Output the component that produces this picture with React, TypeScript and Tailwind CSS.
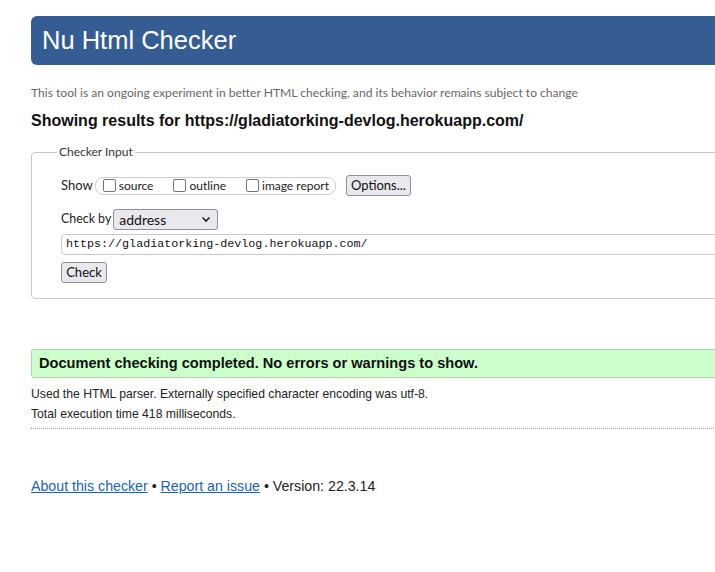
import React from 'react';

const arial = "font-['Liberation_Sans',Arial,sans-serif]";
const ui = "font-['Lato','Open_Sans',sans-serif]";

const Box: React.FC<{ label: string }> = ({ label }) => (
  <label className="flex items-center gap-[3px]">
    <span className="w-[13px] h-[13px] border border-[#767676] rounded-[2px] bg-white" />
    <span className="text-[12px] leading-none text-[#222]">{label}</span>
  </label>
);

const App: React.FC = () => {
  return (
    <div className="w-[715px] h-[572px] overflow-hidden bg-white">
      <div className="w-[780px] pl-[31px] pt-[16px]">
        {/* Header */}
        <header className="h-[49px] bg-[#365c94] rounded-[6px] flex items-center pl-[11px]">
          <h1 className={`${arial} text-white text-[25.5px] leading-none`}>Nu Html Checker</h1>
        </header>

        <p className={`${ui} mt-[20px] text-[12.1px] leading-[16px] text-[#666]`}>
          This tool is an ongoing experiment in better HTML checking, and its behavior remains subject to change
        </p>
        <h2 className={`${arial} mt-[10px] text-[16px] leading-[20px] font-bold text-[#111]`}>
          Showing results for https://gladiatorking-devlog.herokuapp.com/
        </h2>

        {/* Checker input */}
        <fieldset className={`${ui} mt-[13px] border border-[#c8c8c8] rounded-[4px] pl-[29px] pt-[15px] pb-[15px]`}>
          <legend className="ml-[-4px] px-[2px] text-[12px] leading-[16px] text-[#333]">Checker Input</legend>

          <div className="flex items-center">
            <span className="text-[13px] text-[#222] leading-none">Show</span>
            <div className="ml-[2px] h-[18px] flex items-center gap-[20px] border border-[#cfcfcf] rounded-[8px] pl-[7px] pr-[6px]">
              <Box label="source" />
              <Box label="outline" />
              <Box label="image report" />
            </div>
            <button className="ml-[10px] h-[21px] w-[65px] bg-[#e9e9ed] border border-[#8f8f9d] rounded-[3px] text-[13px] text-[#111] leading-none">
              Options...
            </button>
          </div>

          <div className="mt-[13px] flex items-center">
            <span className="text-[12.4px] text-[#222] leading-none">Check by</span>
            <div className="ml-[2px] h-[21px] w-[105px] bg-[#e9e9ed] border border-[#8f8f9d] rounded-[3px] flex items-center justify-between pl-[5px] pr-[6px]">
              <span className="text-[14px] text-[#111] leading-none">address</span>
              <svg width="10" height="7" viewBox="0 0 10 7">
                <path d="M1.5 1.5 L5 5 L8.5 1.5" fill="none" stroke="#222" strokeWidth="1.6" />
              </svg>
            </div>
          </div>

          <div className="mt-[4px] h-[21px] border border-[#c8c8c8] rounded-l-[4px] flex items-center pl-[4px]">
            <span className="font-['Liberation_Mono',monospace] text-[11.7px] text-[#111] leading-none">
              https://gladiatorking-devlog.herokuapp.com/
            </span>
          </div>

          <button className="mt-[7px] h-[21px] w-[46px] bg-[#e9e9ed] border border-[#8f8f9d] rounded-[3px] text-[13px] text-[#111] leading-none">
            Check
          </button>
        </fieldset>

        {/* Result */}
        <div className="mt-[50px] h-[29px] bg-[#ccffcc] border border-[#a8d8a8] rounded-l-[3px] flex items-center pl-[7px]">
          <span className={`${arial} text-[14.6px] font-bold text-[#111] leading-none`}>
            Document checking completed. No errors or warnings to show.
          </span>
        </div>
        <div className={`${arial} mt-[6px] text-[12.2px] leading-[20px] text-[#222] pb-[4px] border-b border-dotted border-[#999]`}>
          <p>Used the HTML parser. Externally specified character encoding was utf-8.</p>
          <p>Total execution time 418 milliseconds.</p>
        </div>

        {/* Footer */}
        <p className={`${arial} mt-[47px] text-[14.2px] leading-[20px] text-[#222]`}>
          <a href="#" className="text-[#1a62b8] underline">About this checker</a>
          {' • '}
          <a href="#" className="text-[#1a62b8] underline">Report an issue</a>
          {' • Version: 22.3.14'}
        </p>
      </div>
    </div>
  );
};

export default App;
